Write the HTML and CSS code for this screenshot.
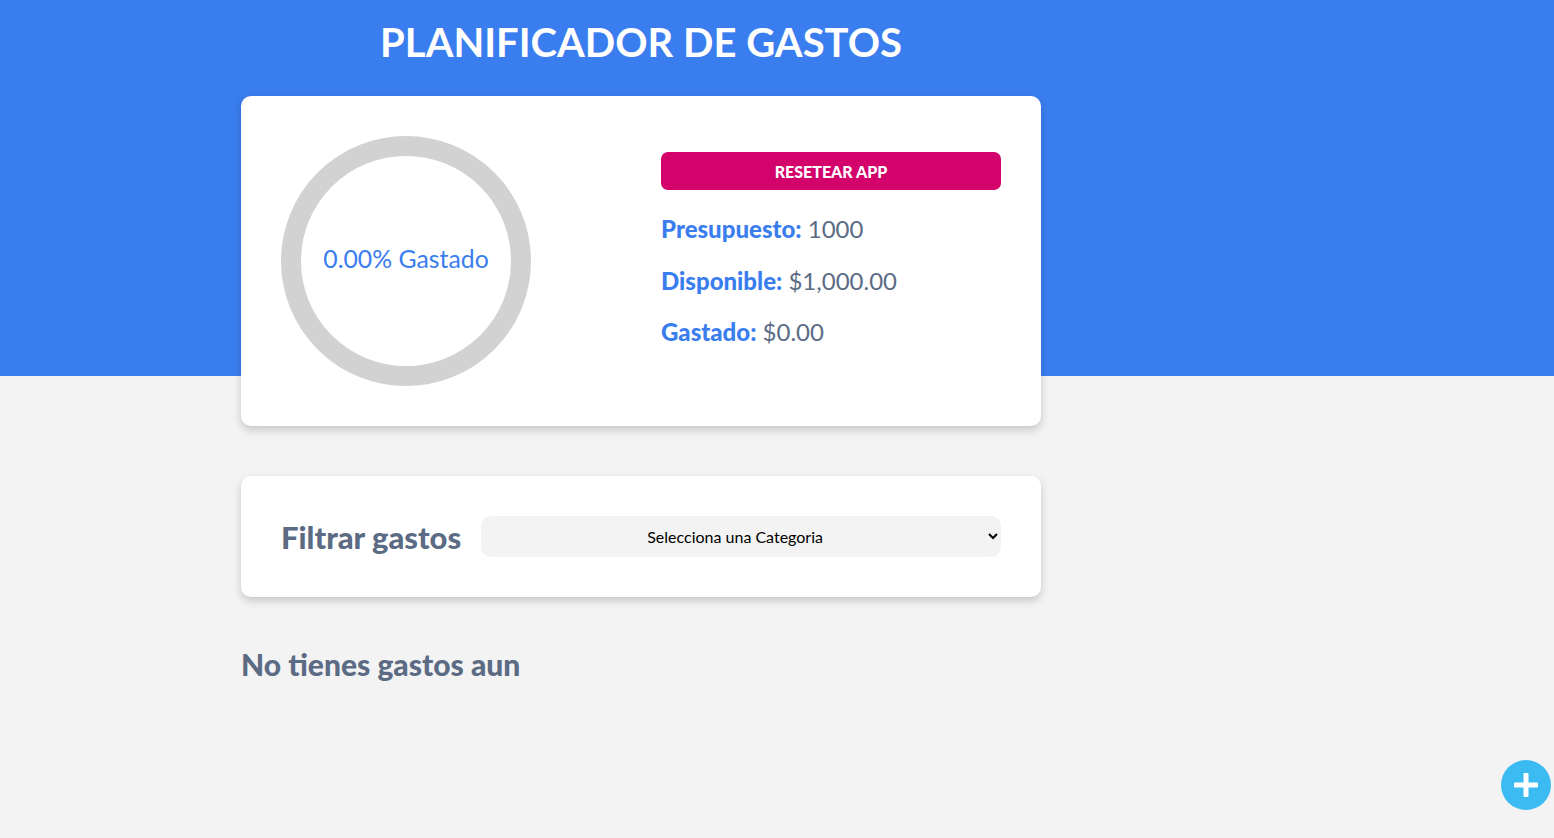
FILE: index.html
```html
<!DOCTYPE html>
<html lang="es">
<head>
<meta charset="utf-8">
<title>Planificador de Gastos</title>
<link rel="stylesheet" href="styles.css">
</head>
<body>
<div class="page">
  <header class="header">
    <h1 class="title">PLANIFICADOR DE GASTOS</h1>
    <div class="card budget">
      <div class="ring-col">
        <div class="ring"><span class="ring-text">0.00% Gastado</span></div>
      </div>
      <div class="info">
        <button class="reset" type="button">RESETEAR APP</button>
        <p class="line"><span class="label">Presupuesto:</span> 1000</p>
        <p class="line"><span class="label">Disponible:</span> $1,000.00</p>
        <p class="line"><span class="label">Gastado:</span> $0.00</p>
      </div>
    </div>
  </header>
  <main class="main">
    <div class="card filter">
      <label class="filter-label" for="cat">Filtrar gastos</label>
      <select id="cat" class="select">
        <option>Selecciona una Categoria</option>
      </select>
    </div>
    <h2 class="empty">No tienes gastos aun</h2>
  </main>
</div>
<button class="add" type="button" aria-label="Nuevo gasto">
  <svg width="50" height="50" viewBox="0 0 50 50"><circle cx="25" cy="25" r="25" fill="#3bbbf2"/><rect x="13" y="22.5" width="24" height="5" rx="1" fill="#fff"/><rect x="22.5" y="13" width="5" height="24" rx="1" fill="#fff"/></svg>
</button>
</body>
</html>
```
FILE: styles.css
```css
* { box-sizing: border-box; }
html, body { margin: 0; padding: 0; }
body {
  font-family: Lato, "Noto Sans", sans-serif;
  background: linear-gradient(to bottom, #3a7dee 0, #3a7dee 376px, #f3f3f3 376px, #f3f3f3 100%);
  min-height: 838px;
  color: #5b6b84;
}
.page {
  width: 800px;
  margin-left: 241px;
}
.title {
  margin: 0;
  padding: 18px 0 30px;
  font-size: 40px;
  line-height: 48px;
  font-weight: 700;
  color: #fff;
  text-align: center;
}
.card {
  background: #fff;
  border-radius: 10px;
  box-shadow: 0 4px 9px rgba(0, 0, 0, 0.18);
}
.budget {
  padding: 40px;
  display: grid;
  grid-template-columns: 1fr 1fr;
  gap: 40px;
}
.ring {
  width: 250px;
  height: 250px;
  border-radius: 50%;
  border: 20px solid #d2d2d2;
  display: flex;
  align-items: center;
  justify-content: center;
  padding-bottom: 6px;
}
.ring-text {
  font-size: 24.8px;
  color: #3a7dee;
}
.info {
  display: flex;
  flex-direction: column;
  justify-content: center;
  padding-bottom: 24px;
}
.reset {
  height: 38px;
  border: 0;
  border-radius: 7px;
  background: #d3036b;
  color: #fff;
  font-family: Lato, sans-serif;
  font-weight: 900;
  font-size: 16px;
  margin-bottom: 25px;
  padding: 0;
}
.line {
  margin: 0 0 23.5px;
  font-size: 24px;
  line-height: 28px;
  color: #5b6b84;
}
.line:last-child { margin-bottom: 0; }
.label {
  font-weight: 900;
  color: #3a7dee;
}
.main {
  padding-top: 50px;
}
.filter {
  padding: 40px;
  display: flex;
  align-items: center;
  gap: 20px;
}
.filter-label {
  font-size: 31px;
  font-weight: 900;
  color: #5b6b84;
  white-space: nowrap;
}
.select {
  flex: 1;
  height: 41px;
  border: 0;
  border-radius: 10px;
  background: #f3f3f3;
  font-family: Lato, sans-serif;
  font-size: 16px;
  color: #000;
  text-align: center;
  padding: 0 8px;
}
.empty {
  margin: 50px 0 0;
  font-size: 30px;
  font-weight: 900;
  color: #5b6b84;
  line-height: 34px;
}
.add {
  position: fixed;
  right: 3px;
  bottom: 28px;
  width: 50px;
  height: 50px;
  padding: 0;
  border: 0;
  background: none;
  cursor: pointer;
}
.add svg { display: block; }
```
